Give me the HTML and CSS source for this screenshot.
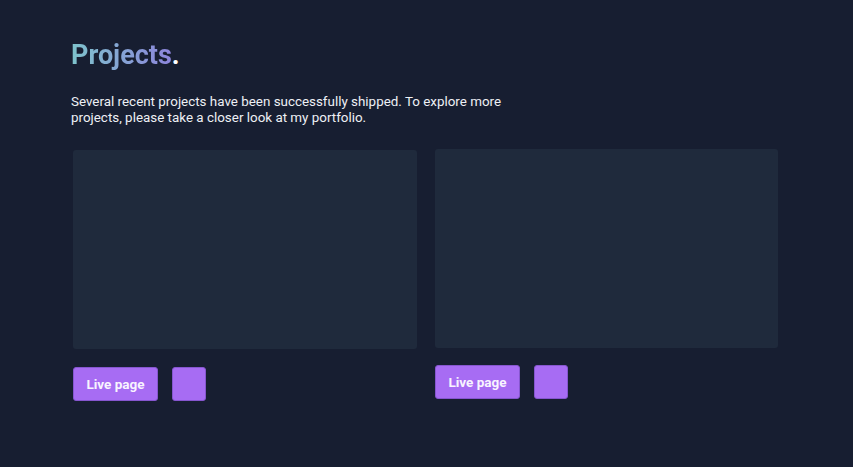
FILE: index.html
```html
<!DOCTYPE html>
<html lang="en">
<head>
<meta charset="utf-8">
<title>Projects</title>
<link rel="stylesheet" href="styles.css">
</head>
<body>
<main class="section">
  <h1 class="title"><span class="grad">Projects</span><span class="dot">.</span></h1>
  <p class="intro">Several recent projects have been successfully shipped. To explore more projects, please take a closer look at my portfolio.</p>
  <div class="grid">
    <article class="project project-a">
      <div class="thumb"></div>
      <div class="actions">
        <a class="btn btn-live" href="#">Live page</a>
        <a class="btn btn-square" href="#" aria-label="Source"></a>
      </div>
    </article>
    <article class="project project-b">
      <div class="thumb"></div>
      <div class="actions">
        <a class="btn btn-live" href="#">Live page</a>
        <a class="btn btn-square" href="#" aria-label="Source"></a>
      </div>
    </article>
  </div>
</main>
</body>
</html>
```
FILE: styles.css
```css
html, body {
  margin: 0;
  padding: 0;
  background: #171e31;
  height: 100%;
}
body {
  font-family: Roboto, "Liberation Sans", sans-serif;
  color: #e8eaf0;
}
.section {
  padding: 36px 75px 0 71px;
}
.title {
  margin: 0;
  font-size: 27px;
  font-weight: 700;
  line-height: 38px;
}
.grad {
  background: linear-gradient(90deg, #7ec3cc 0%, #8d85dc 100%);
  -webkit-background-clip: text;
  background-clip: text;
  color: transparent;
}
.dot {
  color: #ffffff;
}
.intro {
  margin: 20px 0 0 0;
  max-width: 450px;
  font-size: 13.4px;
  line-height: 16px;
  color: #eef0f5;
}
.grid {
  margin-top: 24px;
  display: grid;
  grid-template-columns: 344px 343px;
  column-gap: 18px;
  padding-left: 2px;
}
.project-b {
  margin-top: -1px;
}
.thumb {
  height: 199px;
  background: #1f2a3c;
  border-radius: 3px;
}
.actions {
  display: flex;
  gap: 14px;
  margin-top: 18px;
}
.project-b .actions {
  margin-top: 17px;
}
.btn {
  box-sizing: border-box;
  height: 34px;
  display: inline-flex;
  align-items: center;
  justify-content: center;
  background: #a76cf3;
  border: 1px solid #8656cf;
  border-radius: 3px;
  color: #f8f4ff;
  font-size: 13.5px;
  font-weight: 700;
  text-decoration: none;
}
.btn-live {
  width: 85px;
}
.btn-square {
  width: 34px;
}
```
